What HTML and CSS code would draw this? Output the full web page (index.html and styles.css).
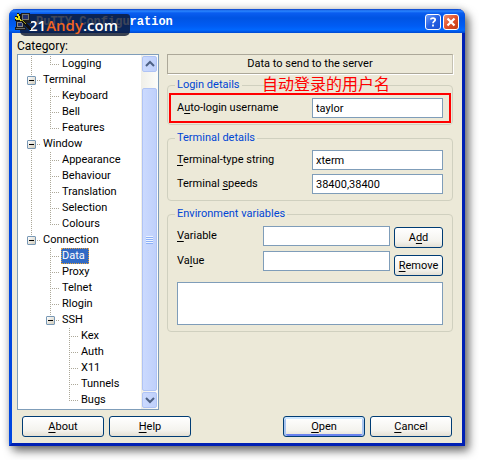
FILE: index.html
```html
<!DOCTYPE html>
<html lang="en">
<head>
<meta charset="utf-8">
<meta name="viewport" content="width=device-width">
<title>PuTTY Configuration</title>
<link rel="stylesheet" href="styles.css">
</head>
<body>
<main class="window">
  <header class="titlebar">
    <svg class="app-icon" width="18" height="18" viewBox="0 0 18 18" shape-rendering="crispEdges">
      <path d="M7 0h9v8h1v2H8V8H7z" fill="#1c1c1c"/><path d="M8 1h7v6H8z" fill="#77776c"/><path d="M9 2h5v4H9z" fill="#23306e"/>
      <path d="M2 8h8v6h2v3H1v-3h1z" fill="#1c1c1c"/><path d="M3 9h6v5H3z" fill="#8a8a86"/><path d="M4 10h4v3H4z" fill="#23306e"/><path d="M2 15h9v1H2z" fill="#6f6f6b"/>
      <path d="M1 3h2V0h2v1h2v5l2 1 8 8v2h-2L6 8H1z" fill="#111"/>
      <path d="M3 1h2v2h1v3h1v1h1v1H6V7H2V6H1V4h2v1h1V3H3z" fill="#e6df1c"/>
      <path d="M7 7h2v1h1v1h1v1h1v1h-1v-1h-1V9H9V8H7z" fill="#a59f1c"/>
    </svg>
    <h1 class="title">PuTTY Configuration</h1>
    <div class="watermark">21<span class="watermark-accent">Andy</span>.com</div>
    <button class="caption-btn help" type="button" aria-label="Context help">
      <svg width="14" height="14" viewBox="0 0 14 14"><path d="M4.8 4.6C4.8 2.6 9.2 2.5 9.2 4.8 9.2 6.3 7 6.5 7 8.2M7 9.6v1.8" fill="none" stroke="#fff" stroke-width="1.8"/></svg>
    </button>
    <button class="caption-btn close" type="button" aria-label="Close">
      <svg width="14" height="14" viewBox="0 0 14 14"><path d="M3.5 3.5l7 7M10.500 3.500l-7 7" stroke="#fff" stroke-width="2.2"/></svg>
    </button>
  </header>

  <form class="body">
    <div class="panes">
      <section class="category">
        <h2 class="category-label" id="category">Category:</h2>
        <div class="tree-box">
          <ul class="tree" aria-labelledby="category">
            <li class="bare"><ul><li>Logging</li></ul></li>
            <li><button class="toggle" type="button" aria-label="Collapse Terminal"></button>Terminal
              <ul><li>Keyboard</li><li>Bell</li><li>Features</li></ul></li>
            <li><button class="toggle" type="button" aria-label="Collapse Window"></button>Window
              <ul><li>Appearance</li><li>Behaviour</li><li>Translation</li><li>Selection</li><li>Colours</li></ul></li>
            <li><button class="toggle" type="button" aria-label="Collapse Connection"></button>Connection
              <ul><li><span class="selected">Data</span></li><li>Proxy</li><li>Telnet</li><li>Rlogin</li>
                <li><button class="toggle" type="button" aria-label="Collapse SSH"></button>SSH
                  <ul><li>Kex</li><li>Auth</li><li>X11</li><li>Tunnels</li><li>Bugs</li></ul></li></ul></li>
          </ul>
          <div class="scrollbar">
            <button class="scroll-btn" type="button" aria-label="Scroll up"><svg width="10" height="8" viewBox="0 0 10 8"><path d="M1 6l4-4 4 4" fill="none" stroke="#4d6185" stroke-width="2"/></svg></button>
            <div class="thumb"><span class="grip"></span></div>
            <button class="scroll-btn" type="button" aria-label="Scroll down"><svg width="10" height="8" viewBox="0 0 10 8"><path d="M1 2l4 4 4-4" fill="none" stroke="#4d6185" stroke-width="2"/></svg></button>
          </div>
        </div>
      </section>

      <section class="settings">
        <h2 class="banner">Data to send to the server</h2>

        <fieldset class="group login">
          <legend>Login details</legend>
          <span class="note" lang="zh">自动登录的用户名</span>
          <div class="field marked">
            <label for="user">A<u>u</u>to-login username</label>
            <input id="user" type="text" value="taylor">
          </div>
        </fieldset>

        <fieldset class="group terminal">
          <legend>Terminal details</legend>
          <div class="field">
            <label for="term"><u>T</u>erminal-type string</label>
            <input id="term" type="text" value="xterm">
          </div>
          <div class="field">
            <label for="speed">Terminal <u>s</u>peeds</label>
            <input id="speed" type="text" value="38400,38400">
          </div>
        </fieldset>

        <fieldset class="group environment">
          <legend>Environment variables</legend>
          <div class="env-editor">
            <div class="env-fields">
              <div class="field"><label for="var"><u>V</u>ariable</label><input id="var" type="text"></div>
              <div class="field"><label for="val">Va<u>l</u>ue</label><input id="val" type="text"></div>
            </div>
            <div class="env-actions">
              <button class="btn" type="button">A<u>d</u>d</button>
              <button class="btn" type="button"><u>R</u>emove</button>
            </div>
          </div>
          <select class="env-list" size="3" aria-label="Environment variables"></select>
        </fieldset>
      </section>
    </div>

    <footer class="actions">
      <button class="btn" type="button"><u>A</u>bout</button>
      <button class="btn" type="button"><u>H</u>elp</button>
      <button class="btn default" type="button"><u>O</u>pen</button>
      <button class="btn" type="button"><u>C</u>ancel</button>
    </footer>
  </form>
</main>
</body>
</html>
```
FILE: styles.css
```css
* { box-sizing: border-box; }

body {
  margin: 0;
  padding: 9px 14px 14px 9px;
  background: #fff;
  color: #000;
  font: 11px/16px Roboto, "Liberation Sans", sans-serif;
}

button, input, select { font: inherit; color: inherit; margin: 0; }
ul { list-style: none; margin: 0; padding: 0; }
h1, h2 { margin: 0; font: inherit; }
u { text-underline-offset: 2px; }

.window {
  border: 3px solid #0046e0;
  border-top: 0;
  border-right-color: #0020b4;
  border-bottom-color: #0020b4;
  border-radius: 7px 7px 0 0;
  background: #ece9d8;
  box-shadow: 4px 5px 10px rgba(0, 0, 0, .55), 0 0 8px rgba(0, 0, 0, .2);
}

.titlebar {
  position: relative;
  display: flex;
  align-items: center;
  gap: 2px;
  height: 24px;
  margin: 0 -3px;
  padding: 1px 6px 0 5px;
  border-radius: 7px 7px 0 0;
  background: linear-gradient(#0a3fc8 0, #2a86ff 2px, #0a5df0 4px, #0054e3 9px, #005cf4 17px, #0068ff 21px, #0048d0 24px);
}
.app-icon { position: relative; z-index: 1; }
.title {
  flex: 1;
  margin-left: 2px;
  color: #fff;
  font: bold 12px/16px "Liberation Mono", monospace;
}
.watermark {
  position: absolute;
  left: 11px;
  top: 5px;
  width: 110px;
  height: 22px;
  padding-left: 9px;
  border-radius: 0 3px 5px 5px;
  background: rgba(12, 22, 48, .8);
  color: #fff;
  font: 600 15px/22px "Open Sans", sans-serif;
  z-index: 2;
  clip-path: none;
}
.watermark { z-index: 0; }
.watermark-accent { color: #f26522; }

.caption-btn {
  display: grid;
  place-items: center;
  width: 16px;
  height: 16px;
  padding: 0;
  border: 1px solid #fff;
  border-radius: 3px;
}
.caption-btn.help { background: linear-gradient(135deg, #6f9cf8, #2460e4 50%, #1a4fd0); }
.caption-btn.close { background: linear-gradient(135deg, #f09070, #e0502a 50%, #c03c14); }

.body { padding: 5px 9px 6px 5px; }
.panes { display: flex; gap: 8px; }
.category { flex: 0 0 142px; }
.category-label { font-size: 12px; }

.tree-box {
  display: flex;
  justify-content: space-between;
  border: 1px solid #7f9db9;
  background: #fff;
}
.tree { padding: 1px 0 1px 6px; }
.tree li { position: relative; padding-left: 19px; }
.tree li::before {
  content: "";
  position: absolute;
  left: 7px;
  top: 0;
  bottom: 0;
  width: 1px;
  background: repeating-linear-gradient(#aca899 0 1px, transparent 1px 2px);
}
.tree li:last-child::before { bottom: auto; height: 8px; }
.tree li::after {
  content: "";
  position: absolute;
  left: 7px;
  top: 8px;
  width: 9px;
  height: 1px;
  background: repeating-linear-gradient(90deg, #aca899 0 1px, transparent 1px 2px);
}
.tree .bare::after { display: none; }
.toggle {
  position: absolute;
  z-index: 1;
  left: 3px;
  top: 4px;
  width: 9px;
  height: 9px;
  padding: 0;
  border: 1px solid #7898b5;
  border-radius: 1px;
  background: linear-gradient(#000, #000) center / 5px 1px no-repeat, linear-gradient(135deg, #fff, #d0cbbb);
}
.selected {
  display: inline-block;
  margin-left: -1px;
  padding: 0 4px 0 1px;
  outline: 1px dotted #e8a33d;
  outline-offset: -1px;
  background: #316ac5;
  color: #fff;
}

.scrollbar {
  display: flex;
  flex-direction: column;
  gap: 16px;
  flex: 0 0 17px;
  padding: 1px;
  background: linear-gradient(90deg, #f0efe8, #fdfdfa);
}
.scroll-btn, .thumb {
  display: grid;
  place-items: center;
  padding: 0;
  border: 1px solid #afc3f5;
  border-radius: 2px;
  background: linear-gradient(90deg, #cbdafe, #bfd0fb);
}
.scroll-btn { height: 16px; }
.thumb { flex: 1; margin-bottom: -15px; }
.grip { width: 7px; height: 8px; background: repeating-linear-gradient(#eef4fe 0 1px, #8cb0f8 1px 2px); }

.settings { flex: 1; min-width: 0; padding-top: 16px; }
.banner {
  height: 20px;
  border: 1px solid #aca899;
  border-right-color: #c5c2b2;
  line-height: 18px;
  text-align: center;
  box-shadow: 1px 1px #fff;
}
.group {
  min-width: 0;
  margin: 0;
  padding: 6px 9px;
  border: 1px solid #d0d0bf;
  border-radius: 4px;
}
.group legend {
  margin-left: -2px;
  padding: 0 2px;
  color: #0046d5;
  line-height: 12px;
}
.login { position: relative; margin-top: 5px; padding: 2px 1px 1px; }
.login legend { margin-left: 6px; }
.terminal, .environment { margin-top: 7px; }

.field { display: flex; justify-content: space-between; align-items: center; }
.field + .field { margin-top: 4px; }
.field input {
  width: 131px;
  height: 20px;
  padding: 0 3px;
  border: 1px solid #7f9db9;
  background: #fff;
}
.marked { padding: 3px 6px; border: 2px solid #f00; }
.note {
  position: absolute;
  left: 94px;
  top: -17px;
  color: #f00;
  font: 16px/18px "Noto Sans CJK SC", sans-serif;
  white-space: nowrap;
}

.env-editor { display: flex; gap: 4px; }
.env-fields { flex: 1; }
.env-fields .field input { width: 127px; }
.env-fields .field + .field { margin-top: 5px; }
.env-actions { display: flex; flex-direction: column; gap: 7px; padding-top: 1px; width: 49px; }
.env-list {
  display: block;
  width: 100%;
  height: 43px;
  margin-top: 6px;
  border: 1px solid #7f9db9;
  border-radius: 0;
  background: #fff;
}

.btn {
  height: 21px;
  padding: 0;
  border: 1px solid #003c74;
  border-radius: 3px;
  background: linear-gradient(#fff, #f4f3ee 70%, #e4e0d4);
}
.btn.default { box-shadow: inset 0 2px #cee7ff, inset 2px 0 #a9c5f0, inset -2px 0 #a9c5f0, inset 0 -2px #6982ee; }
.actions { display: flex; gap: 5px; padding: 6px 1px 0 5px; }
.actions .btn { width: 82px; }
.actions .default { margin-left: auto; }
```
